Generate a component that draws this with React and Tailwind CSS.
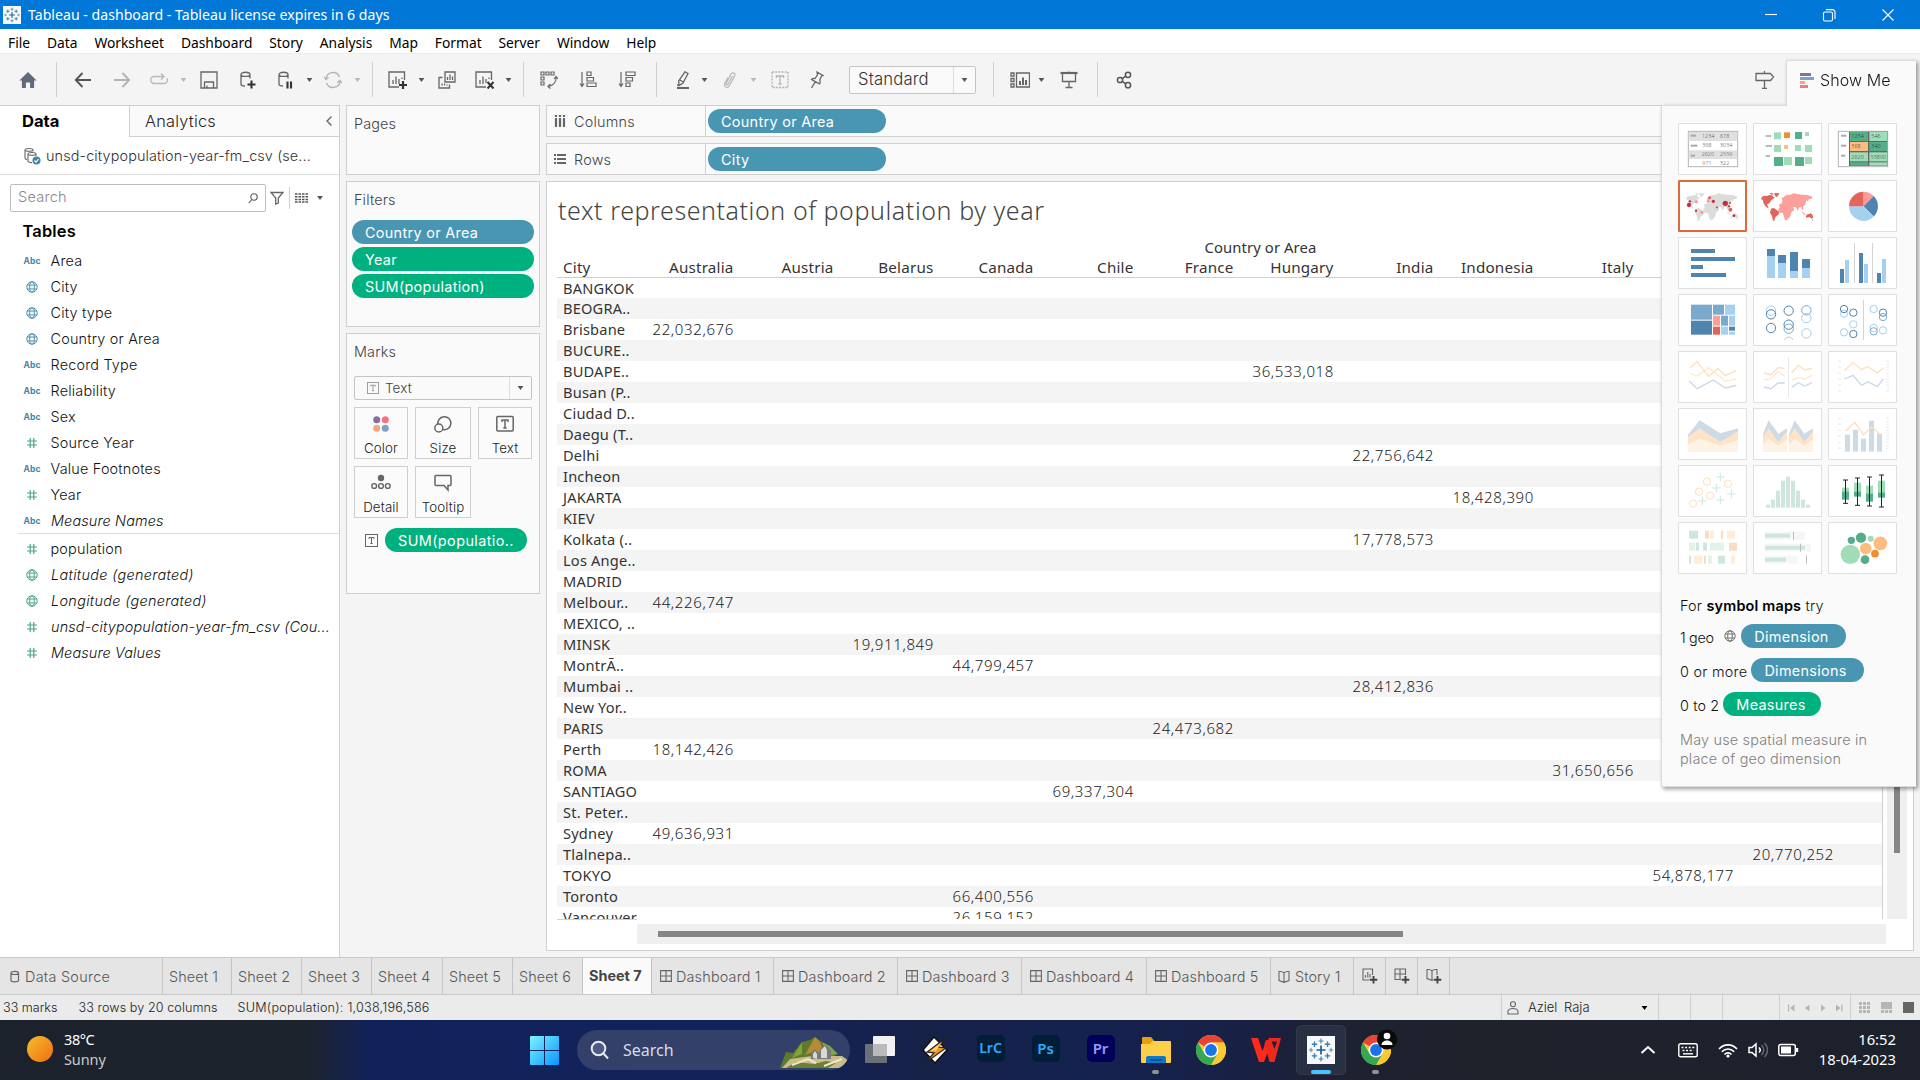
import React from "react";

const UI = "font-['Inter','Liberation_Sans',sans-serif]";
const NOTO = "font-['Noto_Sans','Open_Sans',sans-serif]";

/* ---------- small helpers ---------- */
const Ic = ({ w = 18, h = 18, vb, className = "", children, stroke = "#666", sw = 1.3 }) => (
  <svg
    width={w}
    height={h}
    viewBox={vb || `0 0 ${w} ${h}`}
    fill="none"
    stroke={stroke}
    strokeWidth={sw}
    className={`shrink-0 ${className}`}
  >
    {children}
  </svg>
);

const Caret = ({ className = "", color = "#555", w = 7 }) => (
  <svg width={w} height="6" viewBox="0 0 7 6" className={`shrink-0 ${className}`}>
    <path d="M0.6 1h5.8L3.5 5z" fill={color} />
  </svg>
);

const Sep = ({ className = "" }) => <div className={`h-[35px] w-px shrink-0 bg-[#cfcfcf] ${className}`} />;

const TableauMark = ({ size, className = "" }) => (
  <svg width={size} height={size} viewBox="0 0 28 28" className={`shrink-0 ${className}`} fill="none">
    <rect width="28" height="28" fill="#f6f8fa" />
    <path d="M14 9.5v9M9.5 14h9" stroke="#1f5c94" strokeWidth="1.7" />
    <path d="M14 2.5v5M11.5 5h5M14 20.5v5M11.5 23h5" stroke="#4a86b0" strokeWidth="1.2" />
    <path d="M7.5 5.5v5.4M4.8 8.2h5.4M20.500 5.500v5.400M17.800 8.200h5.400M7.500 17.200v5.400M4.800 19.900h5.400M20.500 17.200v5.400M17.800 19.900h5.400" stroke="#3f7fae" strokeWidth="1.4" />
    <path d="M4 11.800v4.400M1.800 14h4.400M24 11.800v4.400M21.800 14h4.400" stroke="#5b91b5" strokeWidth="1.100" />
  </svg>
);

/* ---------- title bar + menus ---------- */
const TitleBar = () => (
  <div className={`flex h-[29px] items-center bg-[#0178d7] text-white ${NOTO}`}>
    <TableauMark size={18} className="ml-[3px]" />
    <div className="ml-[7px] pt-[2px] text-[14.1px] leading-none tracking-[0.02px] whitespace-nowrap">Tableau - dashboard - Tableau license expires in 6 days</div>
    <div className="mr-[25px] ml-auto flex items-center">
      <Ic w={14} h={14} stroke="#fff" sw={1.1}><path d="M1 6.5h12" /></Ic>
      <Ic w={14} h={14} stroke="#fff" sw={1.1} className="ml-[44px]">
        <rect x="1.500" y="4" width="9" height="9" rx="1.500" />
        <path d="M4 1.600h6.500a2.500 2.500 0 0 1 2.500 2.500V11" />
      </Ic>
      <Ic w={14} h={14} stroke="#fff" sw={1.100} className="ml-[45px]"><path d="M1.500 1.500l11 11M12.500 1.500l-11 11" /></Ic>
    </div>
  </div>
);

const menus = ["File", "Data", "Worksheet", "Dashboard", "Story", "Analysis", "Map", "Format", "Server", "Window", "Help"];
const MenuBar = () => (
  <div className={`flex h-[25px] items-center gap-[16.9px] border-b border-[#ececec] bg-white pt-[3px] pl-2 text-[13.8px] leading-none text-black ${NOTO}`}>
    {menus.map((m) => <span key={m}>{m}</span>)}
  </div>
);

/* ---------- toolbar ---------- */
const Cyl = ({ x = 2 }) => (
  <path d={`M${x} 3.500c0-3 9-3 9 0M${x} 3.500c0 2.600 9 2.600 9 0M${x} 3.500v9.500c0 1.500 2 2 4 2M${x + 9} 3.500v4`} />
);

const Toolbar = () => (
  <div className="flex h-[51px] items-center bg-[#f4f4f4]">
    <Ic className="ml-[19px]" stroke="none"><path d="M9 1L.4 9.400h2.500V17h4v-5.500h4.200V17h4V9.400h2.500z" fill="#5f6b7a" /></Ic>
    <Sep className="ml-[19px]" />
    <Ic className="ml-[17px]" stroke="#555" sw={1.900}><path d="M17 9H2M8.500 2L1.800 9l6.700 7" /></Ic>
    <Ic className="ml-[21px]" stroke="#b4b4b4" sw={1.900}><path d="M1 9h15M9.500 2l6.700 7-6.700 7" /></Ic>
    <Ic className="ml-[19px]" stroke="#b9b9b9" sw={1.400}><path d="M13 5.500H4a3 3.200 0 0 0 0 7h10.500a3 3.200 0 0 0 2.500-5M11 2.500l3 3-3 3" /></Ic>
    <Caret className="ml-[12px]" color="#b9b9b9" />
    <Ic className="ml-[13px]"><path d="M1 1h16v16H1zM4.500 17v-6h9v6M7 17v-2.500" /></Ic>
    <Ic className="ml-[21px]"><Cyl /><path d="M12.500 9.500v8M8.500 13.500h8" stroke="#333" strokeWidth="2.100" /></Ic>
    <Ic className="ml-[20px]"><Cyl /><path d="M10.500 10.500v7M14 10.500v7" stroke="#333" strokeWidth="2.100" /></Ic>
    <Caret className="ml-[11px]" />
    <Ic className="ml-[11px]" stroke="#b4b4b4" sw={1.400}><path d="M2 8a7 7 0 0 1 13.500-2M16 10a7 7 0 0 1-13.500 2M0 6l2 2.500L4.500 6.500M18 12l-2-2.500-2.500 2" /></Ic>
    <Caret className="ml-[12px]" color="#b9b9b9" />
    <Sep className="ml-[11px]" />
    <Ic w={20} className="ml-[15px]"><path d="M16.500 9V1H1v15h10M5 13V9M8 13V5.500M11 13V8M14 8V6.500" /><path d="M15 10v8M11 14h8" stroke="#333" strokeWidth="2.200" /></Ic>
    <Caret className="ml-[10px]" />
    <Ic className="ml-[13px]"><path d="M7 1h10v10H7zM4.500 6.500H1V17h10.500v-3.500M9.500 9V6M12 9V3.500M14.500 9V5.500M4 14.500v-2M6.500 14.500V12.500M9 14.500v-1" /></Ic>
    <Ic w={20} className="ml-[19px]"><path d="M16.500 9V1H1v15h10M5 13V9M8 13V5.500M11 12V8M14 8V6.500" /><path d="M12.500 11l6 6.500M18.500 11l-6 6.500" stroke="#333" strokeWidth="2" /></Ic>
    <Caret className="ml-[10px]" />
    <Sep className="ml-[11px]" />
    <Ic className="ml-[16px]" sw={1.200}><path d="M1 1h3v3H1zM6 1h3v3H6zM11 1h3v3h-3zM1 6h3v3H1zM1 11h3v3H1zM16 6c.500 5-3 8.500-8 9.500M14 8l2-2.500L18 8M10.500 13L8 15.500l2.500 2" /></Ic>
    <Ic className="ml-[21px]" sw={1.200}><path d="M3 1v14M1 12.500L3 15.500l2-3M8 1h4v3.500H8zM8 6.500h6.500V10H8zM8 12h9v3.500H8z" /></Ic>
    <Ic className="ml-[21px]" sw={1.200}><path d="M3 1v14M1 12.500L3 15.500l2-3M8 1h9v3.500H8zM8 6.500h6.500V10H8zM8 12h4v3.500H8z" /></Ic>
    <Sep className="ml-[20px]" />
    <Ic className="ml-[17px]"><path d="M11 .8l3 1.700-5 9.500-4 2.500-.3-4.500zM6 9l3.200 2M3 14h2.500" /><path d="M3 17h12" strokeWidth="2" /></Ic>
    <Caret className="ml-[9px]" />
    <Ic className="ml-[13px]" stroke="#b9b9b9"><path d="M11.500 5l-4.500 8c-.8 1.500-2.600.5-1.800-1L10 3.200c1.500-2.500 5-.8 3.600 1.800L8.500 14.500c-2 3.500-6.500 1.200-4.600-2.200L7 6.500" /></Ic>
    <Caret className="ml-[11px]" color="#b9b9b9" />
    <Ic className="ml-[14px]" stroke="#b4b4b4"><rect x="1" y="1" width="16" height="15.500" strokeDasharray="2 1.200" /><path d="M5.500 7V5h7v2M9 5v8M7.500 13h3" /></Ic>
    <Ic className="ml-[18px]"><path d="M10 1l6 3.500-1.500.8-1.800 3.700c.8 1.500.6 2.800-.2 3.800L4.500 8.500c.8-1 2-1.300 3.500-1l2.500-3.700zM8.300 10.800L4.500 17" /></Ic>
    <div className={`ml-[24px] flex h-[28px] w-[127px] shrink-0 items-center rounded-[2px] border border-[#c4c4c4] bg-[#fafafa] text-[16.700px] font-light tracking-[0.15px] text-[#333] ${UI}`}>
      <span className="w-[103px] pt-px pl-[8px]">Standard</span>
      <div className="flex h-full flex-1 items-center justify-center border-l border-[#ddd]"><Caret /></div>
    </div>
    <Sep className="ml-[17px]" />
    <Ic w={20} className="ml-[16px]"><path d="M1 2h3v3H1zM1 7.500h3v3H1zM1 13h3v3H1zM6.500 2h13v14h-13z" /><path d="M10 14v-4M13 14V6.500M16 14V9" strokeWidth="2" /></Ic>
    <Caret className="ml-[8px]" />
    <Ic className="ml-[15px]"><path d="M.5 2h17" strokeWidth="2.200" /><path d="M2.500 3v7.500h13V3M9 .5v1M9 11v5M5.500 16.500h7" /></Ic>
    <Sep className="ml-[19px]" />
    <Ic className="ml-[18px]" stroke="#555" sw={1.500}><circle cx="4" cy="9" r="2.600" /><circle cx="12" cy="3.800" r="2.600" /><circle cx="12" cy="14.200" r="2.600" /><path d="M6.200 7.700L9.800 5.200M6.200 10.300l3.600 2.500" /></Ic>
    <Ic w={20} className="mr-[145px] ml-auto"><path d="M1 3h14.500l3 3.500-3 3.500H1zM9.500 0v3M9.500 10v8M7 18h5" transform="translate(0,-.5)" /></Ic>
  </div>
);

/* ---------- data pane ---------- */
const FieldIcon = ({ t }) => {
  const c = t[1] === "b" ? "#4a8fb0" : "#4aa882";
  if (t[0] === "a") return <span className={`text-[8.600px] leading-none font-bold text-[#3f87a6] ${UI}`}>Abc</span>;
  if (t[0] === "g")
    return (
      <Ic w={12} h={12} stroke={c} sw={1}>
        <circle cx="6" cy="6" r="5.200" />
        <ellipse cx="6" cy="6" rx="2.300" ry="5.200" />
        <path d="M1.300 4h9.400M1.300 8h9.400" />
      </Ic>
    );
  return <Ic w={10} h={12} stroke={c} sw={1.200}><path d="M3.200 1v10M6.800 1v10M0 4h10M0 8h10" /></Ic>;
};

const IT = "ml-[9px] italic tracking-[0.15px]";
const ITW = "ml-[9px] italic tracking-[0.34px]";
const dims = [
  ["ab", "Area"], ["gb", "City"], ["gb", "City type"], ["gb", "Country or Area"], ["ab", "Record Type"], ["ab", "Reliability"],
  ["ab", "Sex"], ["hg", "Source Year"], ["ab", "Value Footnotes"], ["hg", "Year"], ["ab", "Measure Names", IT],
];
const measures = [
  ["hg", "population"], ["gg", "Latitude (generated)", ITW], ["gg", "Longitude (generated)", ITW],
  ["hg", "unsd-citypopulation-year-fm_csv (Cou...", IT], ["hg", "Measure Values", IT],
];
const Field = ({ f }) => (
  <div className="flex h-[26px] items-center">
    <span className="ml-[22px] flex w-5 items-center justify-center">{<FieldIcon t={f[0]} />}</span>
    <span className={`whitespace-nowrap ${f[2] || "ml-[8.500px] tracking-[0.2px]"}`}>{f[1]}</span>
  </div>
);

const DataPane = () => (
  <div className={`flex w-[340px] shrink-0 flex-col border-r border-[#cfcfcf] bg-white text-[14.400px] font-light text-[#111] ${UI}`}>
    <div className="flex h-[32px]">
      <div className="flex w-[129px] items-center border-t border-[#cfcfcf] pl-[22px] text-[16.600px] font-bold text-black">Data</div>
      <div className="flex flex-1 items-center border-t border-b border-l border-[#cfcfcf] bg-[#fafafa] pt-px pl-[15px] text-[16.300px] tracking-[0.25px] text-[#222]">
        Analytics
        <Ic w={8} h={12} className="mr-[6px] mb-[2px] ml-auto" sw={1.400}><path d="M6.500 1.500L2 6l4.500 4.500" /></Ic>
      </div>
    </div>
    <div className="flex h-[38px] items-center border-b border-[#dedede] text-[#333]">
      <Ic w={18} className="ml-[23px]" sw={1.100}>
        <path d="M2 3c0-2 8-2 8 0M2 3c0 1.600 8 1.600 8 0M2 3v8c0 1 1 1.500 2 1.600M10 3v1.500M5 7c0-2 8-2 8 0M5 7c0 1.600 8 1.600 8 0M5 7v7c0 1 2 1.600 4 1.600M13 7v2" />
        <circle cx="13.500" cy="13.500" r="4" fill="#3f87a6" stroke="none" />
        <path d="M11.500 13.500l1.500 1.600 2.500-3" stroke="#fff" />
      </Ic>
      <span className="ml-[5px] tracking-[0.13px] whitespace-nowrap">unsd-citypopulation-year-fm_csv (se...</span>
    </div>
    <div className="mt-[9px] flex h-[28px] items-center">
      <div className="ml-[10px] flex h-full w-[256px] items-center rounded-[2px] border border-[#bdbdbd] pl-[7px] text-[14.600px] tracking-[0.2px] text-[#8a8a8a]">
        Search
        <Ic w={10} h={11} className="mr-[7px] ml-auto" stroke="#555" sw={1.100}><circle cx="6" cy="4" r="3.200" /><path d="M3.800 6.500L.8 10" /></Ic>
      </div>
      <Ic w={14} h={14} className="ml-[4px]"><path d="M1 1.500h12L8.300 7v5l-2.600 1V7z" /></Ic>
      <div className="ml-[5px] h-[22px] w-px bg-[#cfcfcf]" />
      <Ic w={13} h={12} className="ml-[5px]" stroke="#555" sw={1.500}><path d="M0 2h13M0 4.700h13M0 7.400h13M0 10.100h13" strokeDasharray="2.500 1" /></Ic>
      <Caret className="ml-[8px]" w={8} />
    </div>
    <div className="mt-[7px] flex h-[24px] items-center pl-[22.500px] text-[16.400px] font-semibold tracking-[0.2px] text-black">Tables</div>
    <div className="mt-[5px]">{dims.map((f) => <Field key={f[1]} f={f} />)}</div>
    <div className="ml-[18px] mt-[-1px] border-t border-[#dedede]" />
    <div className="mt-[2px]">{measures.map((f) => <Field key={f[1]} f={f} />)}</div>
  </div>
);

/* ---------- cards column ---------- */
const Card = ({ className, children }) => (
  <div className={`w-[194px] border border-[#cfcfcf] bg-[#fafafa] ${className}`}>{children}</div>
);
const TIcon = ({ w = 13, c = "#666", className = "" }) => (
  <Ic w={w} h={w} vb="0 0 13 13" stroke={c} sw={1} className={className}>
    <rect x=".5" y=".5" width="12" height="12" />
    <path d="M4 5V3.500h5V5M6.500 3.500v6M5.300 9.500h2.400" />
  </Ic>
);
const MarkBtn = ({ label, className, children }) => (
  <div className={`flex h-[52px] flex-col items-center border border-[#cfcfcf] bg-[#fbfbfb] ${className}`}>
    <div className="mt-[7px] flex h-[18px] items-center">{children}</div>
    <div className="mt-[6px] text-[13.300px] leading-[19px] text-[#222]">{label}</div>
  </div>
);

const Cards = () => (
  <div className={`ml-[6px] w-[200px] shrink-0 text-[14.400px] font-light tracking-[0.15px] text-[#444] ${UI}`}>
    <Card className="h-[70px] pt-[8px] pl-[7px] leading-[20px]">Pages</Card>
    <Card className="mt-[6px] h-[146px] pl-[5px]">
      <div className="pt-[8px] pl-[2px] leading-[20px]">Filters</div>
      <div className="mt-[10px] flex w-[182px] flex-col gap-[3px] font-normal tracking-[0.32px] text-white">
        <div className="flex h-[24px] items-center rounded-full bg-[#4996b2] pt-px pl-[13px]">Country or Area</div>
        <div className="flex h-[24px] items-center rounded-full bg-[#00b180] pt-px pl-[13px]">Year</div>
        <div className="flex h-[24px] items-center rounded-full bg-[#00b180] pt-px pl-[13px]">SUM(population)</div>
      </div>
    </Card>
    <Card className="mt-[6px] h-[261px] pl-[7px]">
      <div className="pt-[8px] leading-[20px]">Marks</div>
      <div className="mt-[14px] flex h-[24px] w-[178px] items-center rounded-[2px] border border-[#c4c4c4] text-[13.400px]">
        <TIcon w={12} c="#999" className="ml-[12px]" />
        <span className="ml-[6px]">Text</span>
        <div className="ml-auto flex h-full w-[22px] items-center justify-center border-l border-[#ddd]"><Caret /></div>
      </div>
      <div className="mt-[7px] flex gap-[7px]">
        <MarkBtn label="Color" className="w-[54px]">
          <Ic w={16} h={16} stroke="none"><circle cx="3.700" cy="3.700" r="3.500" fill="#86709b" /><circle cx="12.300" cy="3.700" r="3.500" fill="#f8727f" /><circle cx="3.700" cy="12.300" r="3.500" fill="#f3a57b" /><circle cx="12.300" cy="12.300" r="3.500" fill="#7ba2cd" /></Ic>
        </MarkBtn>
        <MarkBtn label="Size" className="w-[56px]"><Ic sw={1.500}><path d="M4 9.500A6.500 6.500 0 1 1 9 14.500" /><circle cx="4.800" cy="13" r="4" /></Ic></MarkBtn>
        <MarkBtn label="Text" className="w-[54px]"><Ic sw={1.500}><rect x=".8" y="1.500" width="16.400" height="14.500" rx="1" /><path d="M6 7V5h6v2M9 5v8M7.300 13h3.400" /></Ic></MarkBtn>
      </div>
      <div className="mt-[7px] flex gap-[7px]">
        <MarkBtn label="Detail" className="w-[54px]"><Ic w={20} sw={1.400}><circle cx="10" cy="4" r="3.200" fill="#666" stroke="none" /><circle cx="3.200" cy="12" r="2.400" /><circle cx="10" cy="12" r="2.400" /><circle cx="16.800" cy="12" r="2.400" /></Ic></MarkBtn>
        <MarkBtn label="Tooltip" className="w-[56px]"><Ic sw={1.500}><path d="M2 1.500h14a1 1 0 0 1 1 1v8a1 1 0 0 1-1 1h-2V16l-4-4.500H2a1 1 0 0 1-1-1v-8a1 1 0 0 1 1-1z" /></Ic></MarkBtn>
      </div>
      <div className="mt-[10px] flex items-center">
        <TIcon className="ml-[11px]" />
        <div className="ml-[7px] flex h-[24px] w-[142px] items-center rounded-full bg-[#00b180] pt-px pl-[13px] font-normal tracking-[0.42px] text-white">SUM(populatio..</div>
      </div>
    </Card>
  </div>
);

/* ---------- view ---------- */
const Shelf = ({ icon, label, pill, className = "" }) => (
  <div className={`flex h-[32px] border border-[#cfcfcf] bg-[#fafafa] text-[14.400px] font-light tracking-[0.22px] text-[#444] ${UI} ${className}`}>
    <div className="flex w-[159px] items-center border-r border-[#cfcfcf] pl-[7px]">{icon}<span className="ml-[8px] pt-px">{label}</span></div>
    <div className="mt-[3px] ml-[2px] flex h-[24px] w-[178px] items-center rounded-full bg-[#4996b2] pt-px pl-[13px] font-normal tracking-[0.32px] text-white">{pill}</div>
  </div>
);

const heads = ["Australia", "Austria", "Belarus", "Canada", "Chile", "France", "Hungary", "India", "Indonesia", "Italy", "Japan", "Mexico"];
const rows = [
  ["BANGKOK"], ["BEOGRA.."], ["Brisbane", 0, "22,032,676"], ["BUCURE.."], ["BUDAPE..", 6, "36,533,018"], ["Busan (P.."], ["Ciudad D.."],
  ["Daegu (T.."], ["Delhi", 7, "22,756,642"], ["Incheon"], ["JAKARTA", 8, "18,428,390"], ["KIEV"], ["Kolkata (..", 7, "17,778,573"],
  ["Los Ange.."], ["MADRID"], ["Melbour..", 0, "44,226,747"], ["MEXICO, .."], ["MINSK", 2, "19,911,849"], ["MontrÃ..", 3, "44,799,457"],
  ["Mumbai ..", 7, "28,412,836"], ["New Yor.."], ["PARIS", 5, "24,473,682"], ["Perth", 0, "18,142,426"], ["ROMA", 9, "31,650,656"],
  ["SANTIAGO", 4, "69,337,304"], ["St. Peter.."], ["Sydney", 0, "49,636,931"], ["Tlalnepa..", 11, "20,770,252"], ["TOKYO", 10, "54,878,177"],
  ["Toronto", 3, "66,400,556"], ["Vancouver", 3, "26,159,152"],
];

const View = () => (
  <div className={`mt-[6px] flex h-[770px] border border-[#cfcfcf] bg-white text-[#333] ${NOTO}`}>
    <div className="flex w-[1339px] flex-col pl-[10px]">
      <div className="h-[55px] pt-[8px] pl-px text-[25px] leading-[40px] font-light tracking-[0.57px] text-[#444]">text representation of population by year</div>
      <div className="flex h-[682px] w-[1326px] flex-col overflow-hidden border-r border-[#cfcfcf]">
        <div className="ml-[82px] flex h-[21px] shrink-0 items-center justify-center text-[14.800px] font-[450] tracking-[0.1px]">Country or Area</div>
        <div className="flex h-[20px] shrink-0 items-center border-b border-[#cfcfcf] text-[15.200px] font-[450] tracking-[0.2px]">
          <div className="w-[80px] pl-[6px]">City</div>
          {heads.map((h) => <div key={h} className="w-[100px] pr-[3.500px] text-right">{h}</div>)}
        </div>
        {rows.map(([city, col, val], i) => (
          <div key={city} className={`flex shrink-0 items-center ${i ? "h-[21px]" : "h-[20px]"} ${i % 2 ? "bg-[#f4f4f4]" : "bg-white"}`}>
            <div className="w-[80px] overflow-hidden pl-[6px] text-[14.600px] leading-[21px] font-[450] tracking-[0.2px] whitespace-nowrap">{city}</div>
            {val && heads.slice(0, col + 1).map((h, j) => (
              <div key={h} className="w-[100px] shrink-0 pr-[3px] text-right text-[15px] leading-[21px] font-light tracking-[0.62px] text-[#222]">{j === col ? val : ""}</div>
            ))}
          </div>
        ))}
      </div>
      <div className="h-px w-[80px] bg-[#cfcfcf]" />
      <div className="mt-[4px] ml-[80px] flex h-[20px] w-[1249px] items-center bg-[#efefef]">
        <div className="ml-[21px] h-[6px] w-[745px] bg-[#858585]" />
      </div>
    </div>
    <div className="ml-[1px] h-[737px] w-[20px] bg-[#efefef]"><div className="ml-[7px] h-[671px] w-[6px] bg-[#858585]" /></div>
  </div>
);

/* ---------- Show Me thumbnails; each drawn on a 207 x 156 canvas ---------- */
const R = ({ c, d }) => d.map((r, i) => <rect key={i} x={r[0]} y={r[1]} width={r[2]} height={r[3]} fill={r[4] || c} />);
const P = ({ c, d, w = 4 }) => <polyline points={d} fill="none" stroke={c} strokeWidth={w} />;
const O = ({ c, d, r = 14, w = 3 }) => d.map((p, i) => <circle key={i} cx={p[0]} cy={p[1]} r={r} fill="none" stroke={p[2] || c} strokeWidth={w} />);
const Tx = ({ d, c = "#444" }) => d.map((t, i) => <text key={i} x={t[0]} y={t[1]} fontSize="16" fill={c} opacity=".9" fontFamily="Noto Sans">{t[2]}</text>);
const B = "#4e84ad", LB = "#a5d0f0", G = "#55ad8a", LG = "#9fddb9", OR = "#f48e2c", LO = "#fdbd7e";

const americas = "M27 50l8-3 6 1 8-3 8 1 4 5 4 0-4 6-5 2-5 8-4 4-4 1 0 5 3 1-2 4 5 3-5-1-8-7-5-9-1-8-6-2zM54 86l8-2 9 6 8 6-3 8-8 6-4 10 1 3-5-1-3-14-6-10z";
const greenland = "M50 40l8-1 4 3-6 3zM64 39l16 1-4 6-6 6-5-6z";
const oldWorld = "M88 62l4-12 10-6 6 2 14-6 10 2 16 2 16 1 14 5-2 6-8 1-4 8-4-5-1 6-4 10-5 2 2 8-4 4-3-8-6 0-5 10-5-10-10-2 4 6 0 5-8 6-2 8-4 8-8 8-5-1-4-12-2-9-10-1-5-8 6-10-3-1 1-6 6-2zM148 94l8 8 6 3-8-1-6-5zM87 52l3 0 1 7-4 0z";
const australia = "M158 108l7-6 5 0 2-4 7 8 2 6-5 4-6-5-10 2zM178 116l3 3-3 3z";

const thumbs = [
  <>
    <rect x="31" y="25" width="148" height="106" fill="#fff" stroke="#b3b3b3" strokeWidth="3" />
    <R c="#e0e0e0" d={[[32, 27, 146, 27], [32, 82, 146, 26]]} /><R c="#aaa" d={[[38, 35, 16, 6], [38, 65, 20, 6], [38, 95, 13, 6]]} />
    <Tx d={[[72, 46, "1234"], [126, 46, "678"], [73, 73, "368"], [126, 73, "3034"], [71, 100, "2620"], [126, 100, "2559"], [73, 126, "971"], [126, 126, "322"]]} />
  </>,
  <>
    <R c="#bbb" d={[[38, 36, 16, 6], [38, 66, 19, 6], [38, 96, 13, 6]]} />
    <R c={LG} d={[[63, 28, 21, 21], [156, 27, 12, 12], [63, 66, 21, 21], [126, 66, 18, 18], [156, 66, 21, 21], [93, 102, 24, 24], [156, 102, 21, 21]]} />
    <R c={G} d={[[126, 27, 21, 21], [63, 102, 27, 27], [126, 102, 27, 27]]} /><R c={OR} d={[[93, 28, 18, 17], [93, 66, 12, 12, LO]]} />
  </>,
  <>
    <rect x="31" y="25" width="148" height="106" fill="#fff" stroke="#b3b3b3" strokeWidth="3" />
    <R c="#aaa" d={[[39, 35, 16, 6], [39, 65, 16, 6], [39, 95, 13, 6]]} />
    <rect x="63" y="26" width="115" height="103" fill="#666" />
    <R c={LG} d={[[124, 27, 53, 27], [66, 88, 54, 27], [124, 88, 53, 27], [124, 118, 53, 10]]} /><R c={G} d={[[66, 27, 54, 27], [124, 57, 53, 27], [66, 118, 54, 10]]} /><R c={LO} d={[[66, 57, 54, 27]]} />
    <Tx c="#333" d={[[70, 45, "1234"], [130, 45, "546"], [70, 76, "368"], [130, 76, "340"], [70, 107, "2620"], [128, 107, "53890"]]} />
  </>,
  <>
    <path d={americas + greenland + oldWorld + australia} fill="#dcdcdc" />
    <g fill="#c23040"><circle cx="33" cy="75" r="6.500" /><circle cx="142" cy="70" r="8" /><circle cx="106" cy="64" r="5" /><circle cx="36" cy="64" r="3.500" /><circle cx="54" cy="92" r="3.500" /><circle cx="153" cy="79" r="3.500" /><circle cx="168" cy="107" r="4" /></g>
    <g fill="#e2605a"><circle cx="95" cy="53" r="4.500" /><circle cx="117" cy="82" r="3.500" /><circle cx="157" cy="89" r="6" /><circle cx="156" cy="69" r="3.500" /></g>
    <g fill="#fd9c98"><circle cx="55" cy="65" r="5" /><circle cx="71" cy="97" r="5" /><circle cx="91" cy="62" r="5" /></g>
  </>,
  <><path d={americas + australia + greenland} fill="#e2645a" /><path d={oldWorld} fill="#fd9f9b" /></>,
  <g transform="translate(106.500 79)">
    <path d="M0 0V-43.500A43.500 43.500 0 0 1 30.700 -30.700z" fill="#fd9c98" /><path d="M0 0L30.700 -30.700A43.500 43.500 0 0 1 30.700 30.700z" fill={B} />
    <path d="M0 0L30.700 30.700A43.500 43.500 0 0 1 -43.500 0z" fill={LB} /><path d="M0 0H-43.500A43.500 43.500 0 0 1 0 -43.500z" fill="#e2645a" />
  </g>,
  <R c={B} d={[[39, 36, 72, 12], [39, 60, 132, 12], [39, 84, 36, 12], [39, 108, 105, 12]]} />,
  <><R c={LB} d={[[42, 56, 24, 67], [75, 77, 24, 46], [111, 101, 24, 22], [147, 92, 24, 31]]} /><R c={B} d={[[42, 36, 24, 21], [75, 54, 24, 24], [111, 45, 24, 57], [147, 66, 24, 27]]} /></>,
  <><R c="#d4d4d4" d={[[78, 18, 3, 120], [132, 18, 3, 120]]} /><R c={LB} d={[[51, 69, 12, 69], [108, 81, 12, 57], [162, 66, 12, 72]]} /><R c={B} d={[[36, 96, 12, 42], [93, 48, 12, 90], [147, 108, 12, 30]]} /></>,
  <><R c="#7ba9ce" d={[[39, 32, 63, 45], [105, 32, 33, 30], [129, 65, 21, 30]]} /><R c={B} d={[[39, 80, 63, 42], [153, 98, 18, 12]]} /><R c={LB} d={[[141, 32, 30, 30], [153, 65, 18, 30], [129, 98, 21, 24], [153, 113, 18, 9]]} /><R c="#fd9f9b" d={[[105, 65, 21, 30], [105, 98, 21, 24, "#e2645a"]]} /></>,
  <><O c={LB} d={[[54, 50], [160, 49, "#7ba9ce"], [160, 72], [160, 118], [107, 104, "#7ba9ce"]]} /><O c={B} d={[[54, 61], [54, 102], [107, 50], [107, 92]]} /><path d="M94 138a14 14 0 0 1 26 0" fill="none" stroke={LB} strokeWidth="3" /></>,
  <><R c="#d4d4d4" d={[[105, 18, 3, 120]]} /><O r={11} c={LB} d={[[48, 59], [76, 91], [48, 115], [137, 45], [165, 109], [137, 102]]} /><O r={11} c={B} d={[[48, 45], [76, 56], [76, 120], [165, 56], [165, 69, "#7ba9ce"], [137, 112, "#7ba9ce"]]} /></>,
  <><P c="#ffeacb" d="36,67 57,75 92,50 142,90 175,84" /><P c="#fde0bd" d="36,50 57,32 92,76 120,53 142,74 175,58" /><P c="#cad9e6" d="33,90 57,113 106,87 142,111 175,103" /></>,
  <><R c="#e9e9e9" d={[[105, 18, 3, 120]]} /><P c="#ffeacb" d="33,87 54,83 75,61 95,76" /><P c="#ffeacb" d="116,87 136,79 155,84 177,73" /><P c="#fde0bd" d="33,66 54,71 75,50 95,52" /><P c="#fde0bd" d="116,66 136,43 155,57 177,52" /><P c="#cad9e6" d="33,108 54,113 75,96 95,96" /><P c="#cad9e6" d="116,109 136,95 155,105 177,95" /></>,
  <><P c="#fde0bd" d="49,59 75,34 101,56 119,47 148,66 166,50" /><P c="#cad9e6" d="49,84 75,73 101,103 119,92 148,107 166,84" />{[31, 49, 67, 85, 103, 121].map((y) => <R key={y} c="#e9e9e9" d={[[30, y - 2, 9, 3], [174, y - 2, 9, 3]]} />)}{[40, 58, 76, 94, 112].map((y) => <R key={y} c="#eee" d={[[174, y - 2, 9, 3]]} />)}</>,
  <><path d="M30 80L65 37 127 76 180 61V131H30z" fill="#cddbe8" /><path d="M30 86L65 61 127 101 180 70V131H30z" fill="#fee3c9" /><path d="M30 109L65 92 127 113 180 97V131H30z" fill="#fff3e6" /></>,
  <><path d="M30 78L47 37 76 77 102 61V131H30zM108 78L125 37 154 77 180 61V131h-72z" fill="#cddbe8" /><path d="M30 86L47 61 76 101 102 70V131H30zM108 86L125 61 154 101 180 70V131h-72z" fill="#fee3c9" /><path d="M30 109L47 92 76 113 102 94V131H30zM108 109L125 92 154 113 180 94V131h-72z" fill="#fff3e6" /></>,
  <><R c="#cddbe8" d={[[51, 80, 15, 51], [75, 65, 15, 66], [99, 92, 15, 39], [123, 38, 15, 93], [147, 77, 15, 54]]} /><P c="#fde0bd" d="53,70 80,43 106,80 132,56 158,80" />{[31, 49, 67, 85, 103, 121].map((y) => <R key={y} c="#e9e9e9" d={[[30, y - 2, 9, 3], [174, y - 2, 9, 3]]} />)}{[40, 58, 76, 94, 112].map((y) => <R key={y} c="#eee" d={[[174, y - 2, 9, 3]]} />)}</>,
  <><O r={11} c="#fde0bd" d={[[87, 50], [150, 56], [63, 80], [96, 92], [45, 116]]} /><path d="M127 23v26M114 36h26M115 56v26M102 69h26M160 74v26M147 87h26M127 92v26M114 105h26M73 95v26M60 108h26" stroke="#cde7dc" strokeWidth="3" /></>,
  <R c="#cde7dc" d={[[39, 119, 12, 9], [54, 104, 12, 24], [69, 77, 12, 51], [84, 47, 12, 81], [99, 35, 12, 93], [114, 47, 12, 81], [129, 77, 12, 51], [144, 104, 12, 24], [159, 119, 12, 9]]} />,
  <><R c={LG} d={[[42, 68, 21, 14], [78, 53, 21, 28], [114, 62, 21, 25], [150, 47, 21, 38]]} /><R c={G} d={[[42, 80, 21, 24], [78, 80, 21, 15], [114, 86, 21, 24], [150, 83, 21, 15]]} /><path d="M52.500 45v70M45 45h15M45 115h15M88.500 39v82M81 39h15M81 121h15M124.500 36v87M117 36h15M117 123h15M160.500 30v96M153 30h15M153 126h15" stroke="#222" strokeWidth="3" /></>,
  <><R c="#cde7dc" d={[[33, 26, 27, 24], [54, 62, 9, 24], [75, 62, 12, 24], [33, 101, 6, 24], [120, 101, 21, 24]]} /><R c="#e2f3e9" d={[[33, 62, 18, 24], [96, 62, 42, 24], [90, 101, 12, 24]]} /><R c="#fadcc3" d={[[81, 26, 12, 24], [129, 26, 6, 24], [153, 62, 24, 24], [78, 101, 6, 24]]} /><R c="#ffecd9" d={[[96, 26, 12, 24], [147, 26, 24, 24], [48, 101, 24, 24], [159, 101, 12, 24]]} /></>,
  <><R c="#f6f6f6" d={[[36, 29, 120, 24], [36, 65, 138, 24], [36, 101, 98, 24]]} /><R c="#cde7dc" d={[[36, 35, 75, 12], [36, 71, 120, 12], [36, 107, 63, 12]]} /><R c="#bbb" d={[[120, 29, 3, 24], [141, 65, 3, 24], [159, 101, 3, 24]]} /></>,
  <><g fill={LG}><circle cx="67" cy="97" r="29" /><circle cx="128" cy="50" r="9" /></g><g fill={G}><circle cx="99" cy="47" r="15.500" /><circle cx="70" cy="55" r="11" /><circle cx="111" cy="113" r="13" /></g><g fill={LO}><circle cx="157" cy="64" r="20.500" /><circle cx="113" cy="80" r="17.500" /></g><circle cx="141" cy="95" r="11.500" fill={OR} /></>,
];

const ShowMe = () => (
  <div className={`absolute top-[60px] right-[4px] flex w-[255px] flex-col items-end text-[14.400px] font-light tracking-[0.2px] text-[#111] drop-shadow-[2px_2px_2px_rgba(0,0,0,0.4)] ${UI}`}>
    <div className="z-10 -mb-px flex h-[46px] w-[130px] items-center border-t border-l border-[#dcdcdc] bg-[#fafafa] pb-[7px]">
      <Ic w={14} h={16} className="ml-[13px] mt-[1px]" stroke="none"><R d={[[0, 0, 11, 3, "#86709b"], [0, 4, 14, 3, "#7ba2cd"], [0, 8, 5, 3, "#f9a67a"], [0, 12, 8, 3, "#fb7483"]]} /></Ic>
      <span className="ml-[6px] text-[16px] tracking-[0.1px] whitespace-nowrap">Show Me</span>
    </div>
    <div className="h-[682px] w-full border border-r-0 border-[#dcdcdc] bg-[#fafafa] pl-[16px]">
      <div className="mt-[17px] grid grid-cols-[69px_69px_69px] gap-x-[6px] gap-y-[5px]">
        {thumbs.map((t, i) => (
          <div key={i} className={`h-[52px] rounded-[1px] bg-white ${i === 3 ? "ring-2 ring-[#df6a35] ring-inset" : "ring-1 ring-[#dfdfdf] ring-inset"}`}>
            <svg width="69" height="52" viewBox="0 0 207 156" fill="none">{t}</svg>
          </div>
        ))}
      </div>
      <div className="mt-[20px] ml-[2px]">
        <div className="leading-[24px]">For <b className="font-semibold text-black">symbol maps</b> try</div>
        <div className="mt-[6px] flex h-[24px] items-center">
          <span className="w-[44px] pt-[3px] tracking-[-0.3px]">1 geo</span>
          <Ic w={12} h={12} sw={0.900}><circle cx="6" cy="6" r="5.200" /><ellipse cx="6" cy="6" rx="2.300" ry="5.200" /><path d="M1.300 4h9.400M1.300 8h9.400" /></Ic>
          <span className="ml-[5px] flex h-full w-[105px] items-center justify-center rounded-full bg-[#4996b2] pt-px pr-1 font-normal tracking-[0.3px] text-white">Dimension</span>
        </div>
        <div className="mt-[10px] flex h-[24px] items-center">
          <span className="w-[71px] pt-[3px] tracking-[0.25px] whitespace-nowrap">0 or more</span>
          <span className="flex h-full w-[113px] items-center justify-center rounded-full bg-[#4996b2] pt-px pr-1 font-normal tracking-[0.3px] text-white">Dimensions</span>
        </div>
        <div className="mt-[10px] flex h-[24px] items-center">
          <span className="w-[43px] pt-[3px] tracking-[0.1px] whitespace-nowrap">0 to 2</span>
          <span className="flex h-full w-[98px] items-center justify-center rounded-full bg-[#00b180] pt-px pr-0.5 font-normal tracking-[0.3px] text-white">Measures</span>
        </div>
        <div className="mt-[14px] leading-[19px] whitespace-pre-line text-[#808080]">{"May use spatial measure in\nplace of geo dimension"}</div>
      </div>
    </div>
  </div>
);

/* ---------- sheet tabs + status ---------- */
const DashI = () => <Ic w={12} h={12} sw={1.100}><path d="M.6.6h10.800v10.800H.6zM6 .6v10.800M.6 6h10.800" /></Ic>;
const StoryI = () => <Ic w={12} h={13} sw={1.100}><path d="M6 3C5 1.500 3 1.300 1 1.500v9l5 1.800 5-1.800v-9C9 1.300 7 1.500 6 3zM6 3v9" /></Ic>;
const Plus = () => <path d="M11.500 8v7.500M7.700 11.700h7.600" stroke="#444" strokeWidth="1.900" />;

const sheets = [
  ["w-[69px]", "Sheet 1"], ["w-[70px]", "Sheet 2"], ["w-[70px]", "Sheet 3"], ["w-[71px]", "Sheet 4"],
  ["w-[70px]", "Sheet 5"], ["w-[70px]", "Sheet 6"], ["w-[69px]", "Sheet 7"],
];
const dashes = [["w-[122px]", "Dashboard 1"], ["w-[124px]", "Dashboard 2"], ["w-[124px]", "Dashboard 3"], ["w-[125px]", "Dashboard 4"], ["w-[124px]", "Dashboard 5"]];
const tab = "flex h-full shrink-0 items-center border-r border-[#c4c4c4] whitespace-nowrap";

const SheetTabs = () => (
  <div className={`flex h-[38px] border-t border-b border-[#c9c9c9] bg-[#e5e5e5] text-[14.400px] font-light tracking-[0.18px] text-[#555] ${UI}`}>
    <div className={`${tab} w-[163px] pl-[10px]`}>
      <Ic w={10} h={13} sw={1.200}><path d="M1 3c0-2.300 7.500-2.300 7.500 0M1 3c0 2 7.500 2 7.500 0M1 3v7.500c0 1.800 7.500 1.800 7.500 0V3" /></Ic>
      <span className="ml-[5px] pt-px tracking-[0.28px]">Data Source</span>
    </div>
    {sheets.map(([w, s], i) => (
      <div key={s} className={`${tab} ${w} ${i === 6 ? "bg-[#fafafa] pl-[6px] font-bold tracking-[0.02px] text-[#444]" : "pt-px pl-[6px] tracking-[0.12px]"}`}>{s}</div>
    ))}
    {dashes.map(([w, s]) => <div key={s} className={`${tab} ${w} pl-[8px]`}><DashI /><span className="ml-[4px] pt-px">{s}</span></div>)}
    <div className={`${tab} w-[83px] pl-[7px]`}><StoryI /><span className="ml-[5px] pt-px tracking-[0.1px]">Story 1</span></div>
    <div className={`${tab} w-[32px] justify-center`}><Ic w={16} h={16} sw={1.100}><path d="M10.500 7V1H1v11h6M3.500 9.500V7M5.800 9.500V4M8 9.500V6" /><Plus /></Ic></div>
    <div className={`${tab} w-[32px] justify-center`}><Ic w={16} h={16} sw={1.100}><path d="M11.500 7V1H1v10.500h6M6 1v10.500M1 6h10.500" /><Plus /></Ic></div>
    <div className={`${tab} w-[32px] justify-center`}><Ic w={16} h={16} sw={1.100}><path d="M11 7V1.500C9 1.300 7 1.500 6 3 5 1.500 3 1.300 1 1.500v9l5 1.800 1-.3M6 3v9" /><Plus /></Ic></div>
  </div>
);

const StatusBar = () => (
  <div className={`flex h-[25px] items-center bg-[#ebebeb] text-[12.600px] text-[#222] ${UI} font-light`}>
    <span className="ml-[3px] pt-px">33 marks</span>
    <span className="ml-[21px] pt-px tracking-[0.08px]">33 rows by 20 columns</span>
    <span className="ml-[20px] pt-px tracking-[0.23px]">SUM(population): 1,038,196,586</span>
    <div className="ml-auto flex h-full w-[158px] items-center border-x border-[#cfcfcf] text-[13px]">
      <Ic w={12} h={14} className="ml-[5px]" sw={1.100}><circle cx="6" cy="3.200" r="2.500" /><path d="M1 10.500c0-4 10-4 10 0v2.500H1z" /></Ic>
      <span className="ml-[9px] pt-px [word-spacing:3px]">Aziel Raja</span>
      <Caret className="mr-[9px] ml-auto" w={9} color="#000" />
    </div>
    <div className="h-full w-[32px] border-r border-[#cfcfcf]" />
    <div className="h-full w-[32px] border-r border-[#cfcfcf]" />
    <div className="h-full w-[57px] border-r border-[#cfcfcf]" />
    <div className="flex h-full w-[71px] items-center border-r border-[#cfcfcf] pl-[8px]">
      <svg width="55" height="8" viewBox="0 0 55 8" fill="#b5b5b5"><path d="M0 .5h1.200v7H0zM6.500.5v7L2 4zM21.500.5v7L17 4zM33 .5v7L37.500 4zM48 .5v7L52.500 4zM53.200.5h1.200v7h-1.200z" /></svg>
    </div>
    <svg width="56" height="12" viewBox="0 0 56 12" className="mr-[5px] ml-[8px] shrink-0" fill="#b5b5b5">
      {[0, 4, 8].map((y) => [0, 4, 8].map((x) => <rect key={x + "-" + y} x={x} y={y} width="3" height="3" />))}
      <rect x="22" y="0" width="11" height="7" />{[22, 26, 30].map((x) => <rect key={x} x={x} y="8" width="3" height="3" />)}
      <rect x="44" y="0" width="11" height="11" fill="#666" />
    </svg>
  </div>
);

/* ---------- Windows taskbar ---------- */
const Chrome = () => (
  <svg width="30" height="30" viewBox="0 0 30 30">
    <circle cx="15" cy="15" r="15" fill="#fcc934" />
    <path d="M15 15L2 7.500A15 15 0 0 1 28 7.500H15z" fill="#ea4335" />
    <path d="M15 7.500h13A15 15 0 0 1 15 30l6.500-11.250z" fill="#fcc934" />
    <path d="M2 7.500A15 15 0 0 0 15 30l6.500-11.250H8.500z" fill="#34a853" />
    <circle cx="15" cy="15" r="7.500" fill="#fff" /><circle cx="15" cy="15" r="5.900" fill="#1a73e8" />
  </svg>
);
const Cell = ({ children, dot }) => (
  <div className="relative flex h-full w-[55px] shrink-0 items-center justify-center">
    {children}
    {dot && <div className="absolute bottom-[6px] h-[4px] w-[7px] rounded-full bg-[#8e929a]" />}
  </div>
);
const Adobe = ({ t, className }) => (
  <div className={`mb-[3px] flex h-[27px] w-[28px] items-center justify-center rounded-[5px] pb-[1px] leading-none font-semibold ${NOTO} ${className}`}>{t}</div>
);

const Taskbar = () => (
  <div className={`flex h-[60px] items-center bg-[linear-gradient(90deg,#1c222b_0,#1c232d_310px,#11225a_370px,#12235a_760px,#172148_920px,#142250_1080px,#182044_1240px,#1e2130_1340px,#1d222b_1480px,#1c212b_100%)] text-white ${NOTO}`}>
    <div className="mb-[2px] ml-[27px] h-[26px] w-[26px] rounded-full bg-linear-to-br from-[#f3bd2c] to-[#ef6a14]" />
    <div className="mb-[2px] ml-[11px] w-[466px] text-[14.500px] leading-[20px]">
      <div className="tracking-[-0.4px]">38°C</div>
      <div className="tracking-[-0.1px] text-[#c9cbd0]">Sunny</div>
    </div>
    <svg width="29" height="29" viewBox="0 0 29 29" className="shrink-0">
      <defs><linearGradient id="win" x1="0" y1="0" x2="1" y2="1"><stop offset="0" stopColor="#7df4ff" /><stop offset="1" stopColor="#0795ff" /></linearGradient></defs>
      <path d="M1 0h13v14H0V1a1 1 0 0 1 1-1zM15 0h13a1 1 0 0 1 1 1v13H15zM0 15h14v14H1a1 1 0 0 1-1-1zM15 15h14v13a1 1 0 0 1-1 1H15z" fill="url(#win)" />
    </svg>
    <div className="ml-[18px] flex h-[40px] w-[273px] shrink-0 items-center overflow-hidden rounded-full bg-[#32406a] text-[16px] text-[#d9dce6]">
      <Ic w={20} h={20} className="ml-[13px]" stroke="#e8eaf0" sw={2}><circle cx="8.500" cy="8.500" r="6.800" fill="#4c5a86" /><path d="M13.500 13.500l4.500 5" /></Ic>
      <span className="ml-[13px]">Search</span>
      <svg width="70" height="40" viewBox="0 0 70 40" className="ml-auto">
        <path d="M0 38l6-16 7 1 9-11 8-2 5-3 7 5 5 5 5 7 10 4 8 8-3 2z" fill="#5e7a2c" />
        <path d="M35 7l-10 18 8-3 2 8 8-10-3-8z" fill="#b98a35" /><path d="M22 12l-10 16 10-4zM42 12l6 14 10-2-8-8z" fill="#86a23a" />
        <path d="M2 38l8-9 22-3 30 0 7 5-6 7z" fill="#c7bc8b" /><path d="M6 38l10-6 18 2 12-3 10 2-8 5z" fill="#6a8131" />
        <path d="M12 35l16-6 8 4M44 36l18-7" stroke="#efe6cd" strokeWidth="2" fill="none" />
        <path d="M31 29v-6l4-4 4 4 2-5 5-3 5 5v9z" fill="#77797c" /><path d="M33 28v-4l2-3 2 3v5zM41 28v-8l4-4 2 4v8z" fill="#d9d8d3" />
      </svg>
    </div>
    <div className="ml-[3px] flex h-full">
      <Cell><svg width="31" height="28" viewBox="0 0 31 28"><rect x="8" width="22" height="20" rx="1" fill="#f1f1f3" /><rect x="0" y="8" width="22" height="19" rx="1" fill="#6e7077" /><path d="M8 8h14v12H8z" fill="#b9babd" /></svg></Cell>
      <Cell><svg width="27" height="28" viewBox="0 0 27 28"><path d="M12 1l13 13-12 13L1 14z" fill="#fff" stroke="#111" strokeWidth="1.500" /><path d="M25 1L5 16l7 1-9 10L24 12l-8-1z" fill="#f7941e" stroke="#222" strokeWidth="1.200" /><path d="M20 6L9 14.500l5 .5" fill="#ffd36b" /></svg></Cell>
      <Cell><Adobe t="LrC" className="bg-[#001e36] text-[14px] text-[#31a8ff]" /></Cell>
      <Cell><Adobe t="Ps" className="bg-[#001e36] text-[15px] text-[#31a8ff]" /></Cell>
      <Cell><Adobe t="Pr" className="bg-[#00005b] text-[15px] text-[#9a99ff]" /></Cell>
      <Cell dot><svg width="30" height="28" viewBox="0 0 30 28"><path d="M1 2a1 1 0 0 1 1-1h8l3 3.500V8H1z" fill="#e5a00d" /><path d="M12 5h17a1 1 0 0 1 1 1v20a1 1 0 0 1-1 1H1a1 1 0 0 1-1-1V8h9z" fill="#ffcf48" /><path d="M5 27v-5a2 2 0 0 1 2-2h16a2 2 0 0 1 2 2v5z" fill="#1276c9" /><path d="M9 24h12" stroke="#0b4f92" strokeWidth="1.500" /></svg></Cell>
      <Cell><Chrome /></Cell>
      <Cell><svg width="30" height="24" viewBox="0 0 30 24"><path d="M0 0h7l4.500 13L14 6l3 7-4 11H8z" fill="#ff2a1c" /><path d="M13.500 6L15 2h5l3.500 9L26 3.500h-8.500V0H30l-6.500 24H18.500z" fill="#f0281c" /></svg></Cell>
      <Cell>
        <div className="flex h-[50px] w-[50px] items-center justify-center rounded-[5px] border border-[#343a4d] bg-[#2a3044]"><TableauMark size={28} /></div>
        <div className="absolute bottom-[6px] h-[4px] w-[20px] rounded-full bg-[#4cc2ff]" />
      </Cell>
      <Cell dot>
        <Chrome />
        <svg width="20" height="21" viewBox="0 0 20 21" className="absolute top-[9px] right-[6px]"><circle cx="10" cy="10.500" r="10" fill="#0a0a0a" /><circle cx="10" cy="7" r="3.300" fill="#fff" /><path d="M4.500 16c0-6 11-6 11 0z" fill="#fff" /></svg>
      </Cell>
    </div>
    <div className="ml-auto flex items-center">
      <Ic w={16} h={10} stroke="#fff" sw={2}><path d="M1.500 8L8 2l6.500 6" /></Ic>
      <Ic w={20} h={15} stroke="#fff" sw={1.400} className="ml-[22px]"><rect x=".8" y=".8" width="18.400" height="13" rx="1.800" /><path d="M3.500 4.500h13M4.500 7.500h11" strokeDasharray="2 1.600" /><path d="M5 10.800h10" /></Ic>
      <Ic w={20} h={15} stroke="#fff" sw={1.600} className="ml-[20px]"><path d="M1 6c5-5.500 13-5.500 18 0M3.800 8.800c3.500-3.800 8.900-3.800 12.400 0M6.500 11.500c2-2.200 5-2.200 7 0" /><circle cx="10" cy="13" r="1.600" fill="#fff" stroke="none" /></Ic>
      <Ic w={20} h={16} stroke="#fff" sw={1.500} className="ml-[10px]"><path d="M1 5.500h3L8 2v12l-4-3.500H1zM11 5.500c1.500 1.500 1.500 3.500 0 5" /><path d="M13.500 3c3 3 3 7 0 10M16.500 1c4 4 4 10 0 14" stroke="#62666f" /></Ic>
      <Ic w={21} h={14} stroke="#fff" sw={1.500} className="ml-[10px]"><rect x=".8" y="1.500" width="16.500" height="11" rx="2" /><rect x="3" y="3.500" width="10" height="7" fill="#fff" stroke="none" /><path d="M19 5v4" strokeWidth="2.400" /></Ic>
    </div>
    <div className="mr-[24px] mb-[2px] ml-[16px] w-[81px] text-right text-[14.800px] leading-[20px]"><div>16:52</div><div>18-04-2023</div></div>
  </div>
);

export default function App() {
  return (
    <div className="relative flex h-[1080px] w-[1920px] flex-col overflow-hidden bg-[#f4f4f4]">
      <TitleBar />
      <MenuBar />
      <Toolbar />
      <div className="flex h-[852px]">
        <DataPane />
        <Cards />
        <div className="w-[1368px] shrink-0">
          <Shelf label="Columns" pill="Country or Area" icon={<Ic w={12} h={12} sw={2.200}><path d="M2 0v2M6 0v2M10 0v2M2 3v9M6 3v9M10 3v9" /></Ic>} />
          <Shelf className="mt-[6px]" label="Rows" pill="City" icon={<Ic w={12} h={12} sw={2.200}><path d="M0 2h2M0 6h2M0 10h2M3 2h9M3 6h9M3 10h9" /></Ic>} />
          <View />
        </div>
      </div>
      <SheetTabs />
      <StatusBar />
      <Taskbar />
      <ShowMe />
    </div>
  );
}
